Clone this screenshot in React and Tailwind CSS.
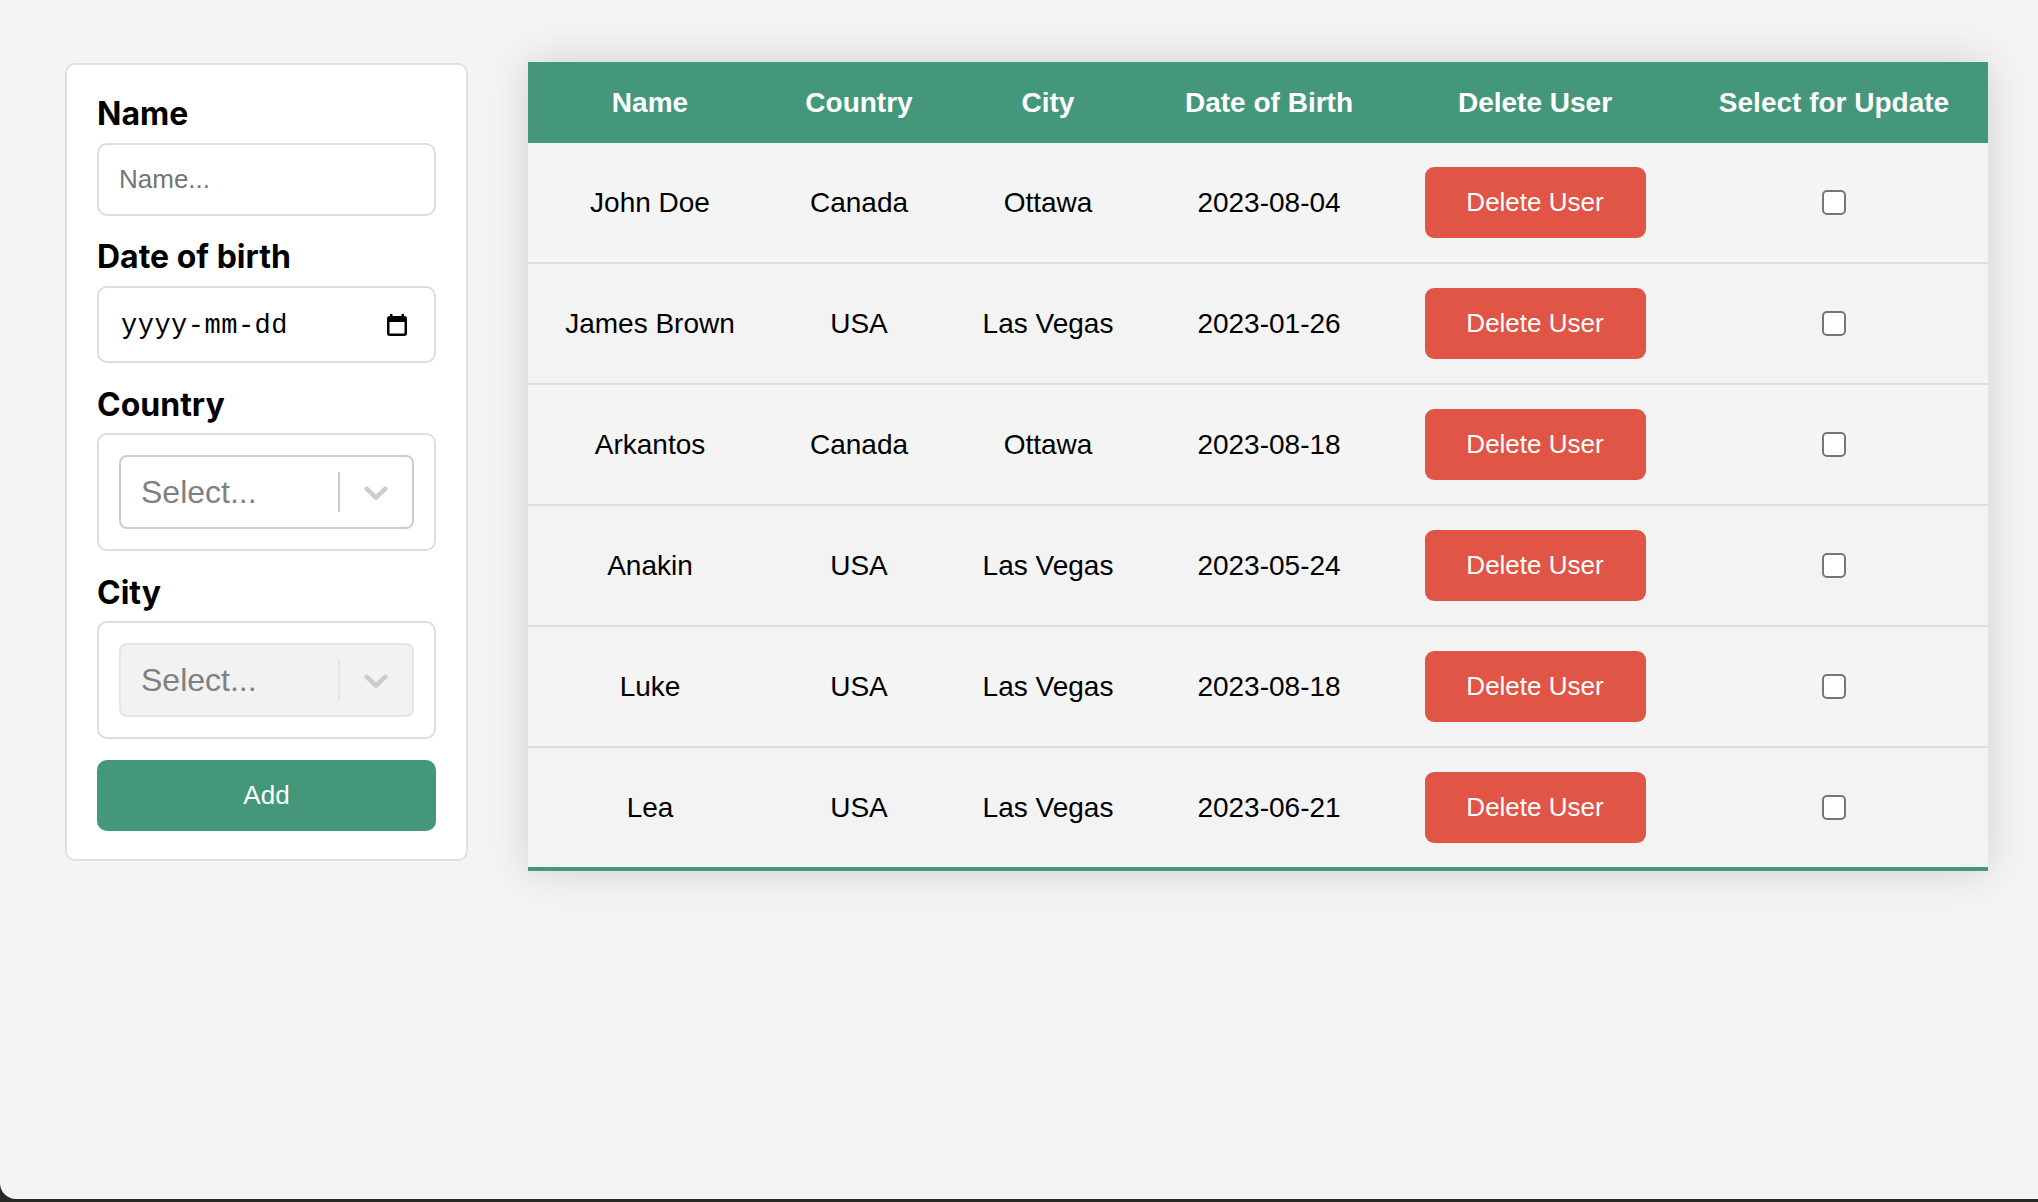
import { useState } from 'react';

const users = [
  { name: 'John Doe', country: 'Canada', city: 'Ottawa', dob: '2023-08-04' },
  { name: 'James Brown', country: 'USA', city: 'Las Vegas', dob: '2023-01-26' },
  { name: 'Arkantos', country: 'Canada', city: 'Ottawa', dob: '2023-08-18' },
  { name: 'Anakin', country: 'USA', city: 'Las Vegas', dob: '2023-05-24' },
  { name: 'Luke', country: 'USA', city: 'Las Vegas', dob: '2023-08-18' },
  { name: 'Lea', country: 'USA', city: 'Las Vegas', dob: '2023-06-21' },
];

const cols = 'grid grid-cols-[244px_174px_204px_238px_294px_304px] items-center text-center';

function Chevron() {
  return (
    <svg width="40" height="40" viewBox="0 0 20 20" fill="#cccccc">
      <path d="M4.516 7.548c0.436-0.446 1.043-0.481 1.576 0l3.908 3.747 3.908-3.747c0.533-0.481 1.141-0.446 1.574 0 0.436 0.445 0.408 1.197 0 1.615-0.406 0.418-4.695 4.502-4.695 4.502-0.217 0.223-0.502 0.335-0.787 0.335s-0.57-0.112-0.789-0.335c0 0-4.287-4.084-4.695-4.502s-0.436-1.17 0-1.615z" />
    </svg>
  );
}

function Select({ disabled }) {
  return (
    <div className="h-[118px] border-2 border-[#dddddd] rounded-[10px] p-[20px]">
      <div
        className={
          'h-[74px] border-2 rounded-[8px] flex items-center ' +
          (disabled ? 'bg-[#f2f2f2] border-[#e6e6e6]' : 'bg-white border-[#cccccc]')
        }
      >
        <div className="flex-1 pl-[20px] text-[32px] text-[#808080]">Select...</div>
        <div className={'w-[2px] h-[40px] ' + (disabled ? 'bg-[#e6e6e6]' : 'bg-[#cccccc]')} />
        <div className="px-[16px] flex items-center">
          <Chevron />
        </div>
      </div>
    </div>
  );
}

export default function App() {
  const [name, setName] = useState('');
  const [selected, setSelected] = useState({});

  return (
    <div className="h-[1202px] bg-[#2a2a24] font-['Liberation_Sans',Arial,sans-serif]">
      <div className="h-[1199px] bg-[#f4f4f4] rounded-bl-[16px] flex items-start">
        {/* form */}
        <div className="ml-[65px] mt-[63px] w-[403px] bg-white border-2 border-[#e0e0e0] rounded-[10px] px-[30px] pt-[30px] pb-[28px]">
          <label className="block font-['Inter',sans-serif] font-bold text-[32px] leading-[38px] text-black">Name</label>
          <input
            type="text"
            value={name}
            onChange={(e) => setName(e.target.value)}
            placeholder="Name..."
            className="mt-[10px] w-full h-[73px] border-2 border-[#dddddd] rounded-[10px] pl-[20px] text-[26px] placeholder:text-[#757575] outline-none"
          />

          <label className="block mt-[22px] font-['Inter',sans-serif] font-bold text-[32px] leading-[38px] text-black">Date of birth</label>
          <div className="mt-[10px] h-[77px] border-2 border-[#dddddd] rounded-[10px] pl-[22px] pr-[27px] flex items-center justify-between">
            <span className="mt-[4px] font-['Liberation_Mono',monospace] text-[27px] tracking-[0.5px] text-black">yyyy-mm-dd</span>
            <svg width="20" height="22" viewBox="0 0 20 22">
              <rect x="1.25" y="3.25" width="17.5" height="17.5" rx="1.5" stroke="black" strokeWidth="2.5" fill="none" />
              <rect x="1" y="3" width="18" height="5" fill="black" />
              <rect x="3" y="0" width="2.5" height="4" fill="black" />
              <rect x="14.5" y="0" width="2.5" height="4" fill="black" />
            </svg>
          </div>

          <label className="block mt-[23px] font-['Inter',sans-serif] font-bold text-[32px] leading-[38px] text-black">Country</label>
          <div className="mt-[9px]">
            <Select />
          </div>

          <label className="block mt-[23px] font-['Inter',sans-serif] font-bold text-[32px] leading-[38px] text-black">City</label>
          <div className="mt-[9px]">
            <Select disabled />
          </div>

          <button className="mt-[21px] w-full h-[71px] bg-[#44977b] rounded-[10px] text-white text-[26px]">Add</button>
        </div>

        {/* table */}
        <div className="ml-[60px] mt-[62px] w-[1460px] shadow-[0_0_40px_rgba(0,0,0,0.15)]">
          <div className={cols + ' h-[81px] bg-[#44977b] text-white font-bold text-[28px]'}>
            <div>Name</div>
            <div>Country</div>
            <div>City</div>
            <div>Date of Birth</div>
            <div>Delete User</div>
            <div>Select for Update</div>
          </div>
          {users.map((u, i) => {
            const last = i === users.length - 1;
            return (
              <div
                key={i}
                className={
                  cols +
                  ' text-[28px] text-black ' +
                  (i % 2 === 1 ? 'bg-[#f3f3f3] ' : 'bg-[#f4f4f4] ') +
                  (last ? 'h-[123px] border-b-4 border-[#44977b]' : 'h-[121px] border-b-2 border-[#dddddd]')
                }
              >
                <div>{u.name}</div>
                <div>{u.country}</div>
                <div>{u.city}</div>
                <div>{u.dob}</div>
                <div className="flex justify-center">
                  <button className="w-[221px] h-[71px] rounded-[9px] bg-[#e05545] text-white text-[26px]">Delete User</button>
                </div>
                <div className="flex justify-center">
                  <input
                    type="checkbox"
                    checked={!!selected[i]}
                    onChange={() => setSelected((p) => ({ ...p, [i]: !p[i] }))}
                    className="appearance-none w-[24px] h-[25px] border-2 border-[#767676] rounded-[5px] bg-white"
                  />
                </div>
              </div>
            );
          })}
        </div>
      </div>
    </div>
  );
}
